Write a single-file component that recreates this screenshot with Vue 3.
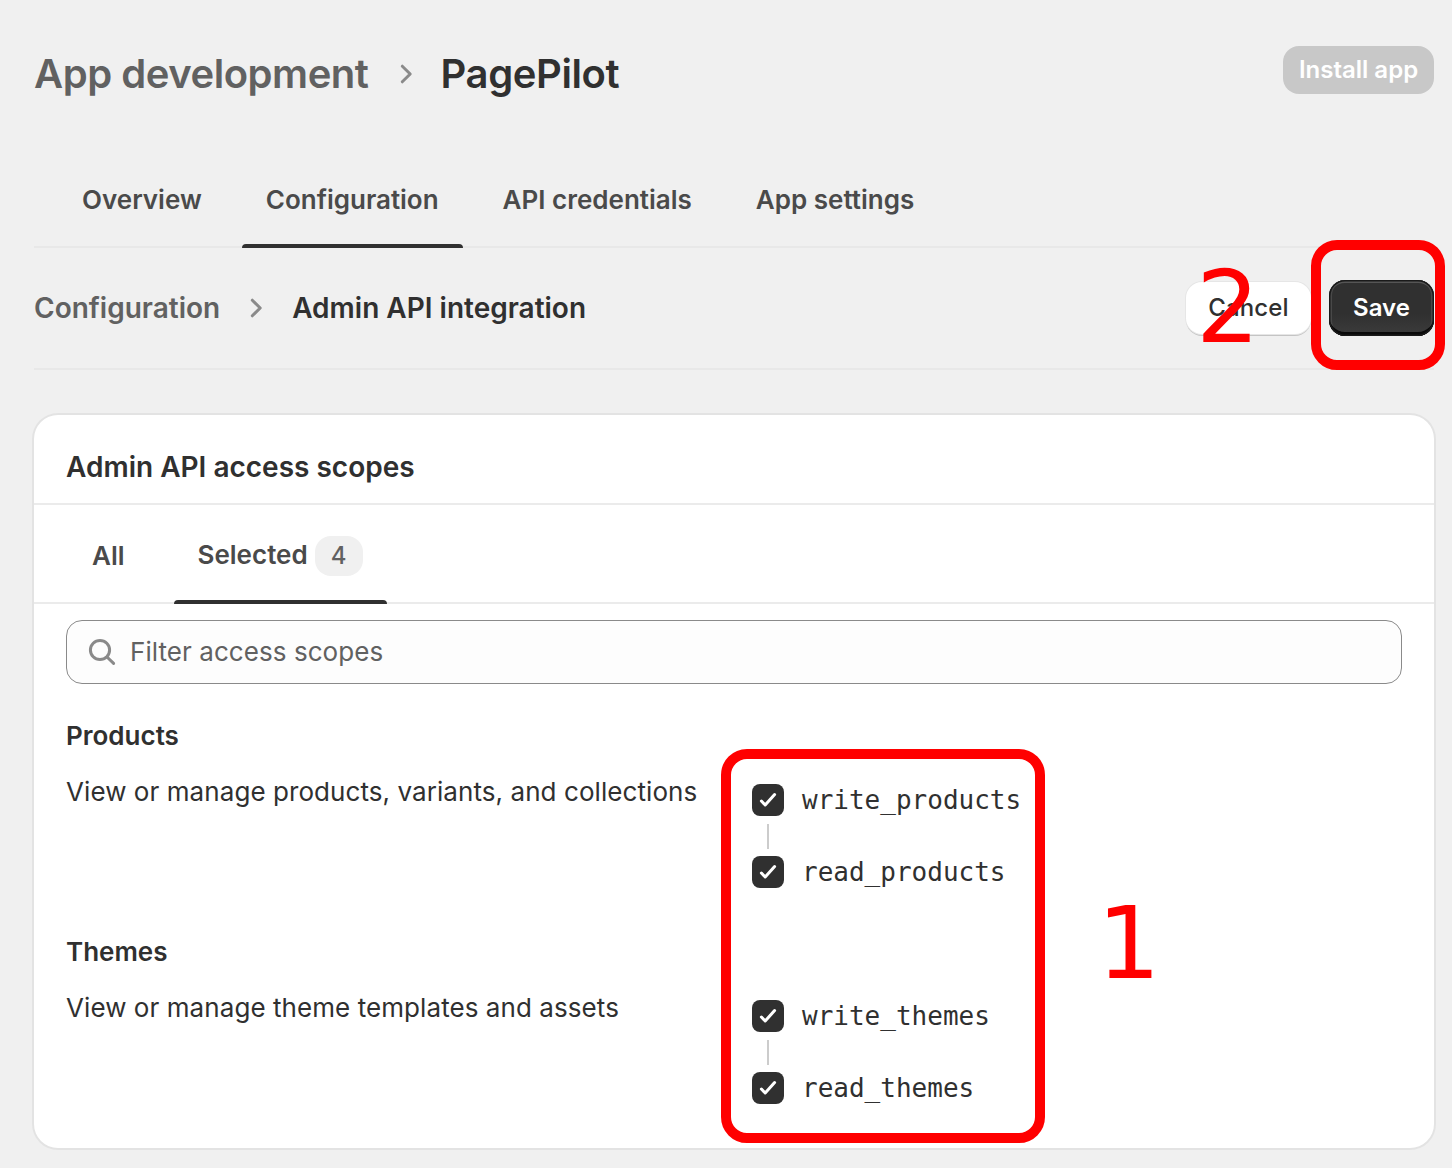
<script setup>
const tabs = [
  { label: 'Overview' },
  { label: 'Configuration', active: true },
  { label: 'API credentials' },
  { label: 'App settings' },
]
const groups = [
  {
    name: 'Products',
    description: 'View or manage products, variants, and collections',
    scopes: ['write_products', 'read_products'],
  },
  {
    name: 'Themes',
    description: 'View or manage theme templates and assets',
    scopes: ['write_themes', 'read_themes'],
  },
]
</script>

<template>
  <div class="page">
    <header class="header">
      <h1 class="title">
        <span class="muted">App development</span>
        <svg class="chevron" width="16" height="24" viewBox="0 0 16 24">
          <path d="M3.3 4.2 L11.2 12 L3.3 19.8" />
        </svg>
        <span class="current">PagePilot</span>
      </h1>
      <button class="install" disabled>Install app</button>
    </header>

    <nav class="tabs">
      <a v-for="t in tabs" :key="t.label" class="tab" :class="{ active: t.active }">{{ t.label }}</a>
    </nav>

    <div class="subheader">
      <h2 class="crumbs">
        <span class="muted">Configuration</span>
        <svg class="chevron" width="16" height="24" viewBox="0 0 16 24">
          <path d="M3.3 4.2 L11.2 12 L3.3 19.8" />
        </svg>
        <span>Admin API integration</span>
      </h2>
      <div class="actions">
        <button class="btn cancel">Cancel<span class="step two">2</span></button>
        <button class="btn save">Save<span class="outline outline-save"></span></button>
      </div>
    </div>

    <section class="card">
      <h3 class="card-title">Admin API access scopes</h3>
      <nav class="card-tabs">
        <a class="tab all">All</a>
        <a class="tab selected active">Selected<span class="badge">4</span></a>
      </nav>
      <div class="field">
        <svg width="28" height="28" viewBox="0 0 28 28">
          <circle cx="12" cy="12" r="9.6" />
          <path d="M19 19 L25.6 25.4" />
        </svg>
        <span>Filter access scopes</span>
      </div>

      <div class="groups">
        <div v-for="g in groups" :key="g.name" class="group">
          <h4>{{ g.name }}</h4>
          <div class="row">
            <p>{{ g.description }}</p>
            <ul>
              <li v-for="s in g.scopes" :key="s">
                <span class="box">
                  <svg width="32" height="32" viewBox="0 0 32 32">
                    <path d="M9.4 17 L13.2 21 L22.6 10.6" />
                  </svg>
                </span>
                <code>{{ s }}</code>
              </li>
            </ul>
          </div>
        </div>
        <span class="outline outline-scopes"></span>
        <span class="step one">1</span>
      </div>
    </section>
  </div>
</template>

<style>
body {
  background: #f0f0f0;
}
</style>

<style scoped>
.page {
  box-sizing: border-box;
  width: 1452px;
  height: 1168px;
  padding: 0 18px 0 34px;
  overflow: hidden;
  background: #f0f0f0;
  color: #303030;
  font-family: Inter, "Liberation Sans", sans-serif;
  font-size: 26px;
  font-weight: 400;
}
h1, h2, h3, h4, p, ul {
  margin: 0;
  padding: 0;
}
button {
  border: 0;
  padding: 0 0 2px;
  font-family: inherit;
}
.header {
  display: flex;
  justify-content: space-between;
  height: 168px;
}
.title {
  display: flex;
  align-items: center;
  height: 48px;
  margin-top: 49px;
  font-size: 40px;
  font-weight: 600;
  letter-spacing: -0.4px;
}
.muted {
  color: #616161;
}
.title .muted {
  letter-spacing: -0.46px;
}
.chevron {
  fill: none;
  stroke: #8a8a8a;
  stroke-width: 3;
  stroke-linecap: round;
  stroke-linejoin: round;
}
.title .chevron {
  margin: 2px 26px 0 30px;
}
.install {
  width: 151px;
  height: 48px;
  margin-top: 46px;
  border-radius: 16px;
  background: #c8c8c8;
  color: #fff;
  font-size: 24px;
  font-weight: 600;
}
.tabs {
  display: flex;
  gap: 16px;
  height: 78px;
  padding-left: 24px;
  border-bottom: 2px solid #e8e8e8;
}
.tab {
  position: relative;
  box-sizing: border-box;
  padding: 0 24px;
  color: #4a4a4a;
  font-weight: 600;
  line-height: 64px;
  white-space: nowrap;
}
.tab.active::after {
  content: "";
  position: absolute;
  left: 0;
  right: 0;
  bottom: -2px;
  height: 4px;
  border-radius: 4px 4px 0 0;
  background: #303030;
}
.subheader {
  display: flex;
  align-items: center;
  justify-content: space-between;
  height: 120px;
  border-bottom: 2px solid #e8e8e8;
}
.crumbs {
  display: flex;
  align-items: center;
  font-size: 28px;
  font-weight: 600;
}
.crumbs .chevron {
  margin: 0 27px 0 29px;
}
.actions {
  display: flex;
  gap: 18px;
}
.btn {
  position: relative;
  height: 56px;
  border-radius: 16px;
  font-size: 24px;
}
.cancel {
  width: 125px;
  height: 52px;
  margin-top: 2px;
  background: #fff;
  color: #303030;
  font-weight: 500;
  letter-spacing: 0.1px;
  box-shadow: 0 0 0 1px #e6e6e6, 0 2px 0 #c4c4c4;
}
.save {
  width: 105px;
  background: linear-gradient(#303030 60%, #3c3c3c);
  color: #fff;
  font-weight: 600;
  box-shadow: inset 0 0 0 1.5px #1a1a1a, inset 0 -4px 0 #0a0a0a, inset 0 3px 0 #555, inset 3px 0 0 #484848, inset -3px 0 0 #484848;
}
.card {
  height: 733px;
  margin-top: 45px;
  border-radius: 24px;
  background: #fff;
  box-shadow: 0 0 0 2px #e3e3e3;
}
.card-title {
  box-sizing: border-box;
  height: 90px;
  padding: 32px 32px 0;
  border-bottom: 2px solid #ebebeb;
  font-size: 28px;
  font-weight: 600;
  line-height: 40px;
}
.card-tabs {
  display: flex;
  gap: 25px;
  height: 97px;
  padding-left: 34px;
  border-bottom: 2px solid #ebebeb;
}
.card-tabs .tab {
  line-height: 101px;
}
.card-tabs .selected {
  line-height: 99px;
}
.badge {
  display: inline-block;
  width: 48px;
  height: 40px;
  margin-left: 7px;
  border-radius: 16px;
  background: #f0f0f0;
  color: #616161;
  font-size: 24px;
  font-weight: 500;
  line-height: 40px;
  text-align: center;
}
.field {
  display: flex;
  align-items: center;
  box-sizing: border-box;
  height: 64px;
  margin: 16px 32px 0;
  padding-left: 21px;
  gap: 14px;
  border: 1px solid #8a8a8a;
  border-radius: 16px;
  background: #fdfdfd;
  color: #616161;
}
.field span {
  margin-bottom: 2px;
  letter-spacing: 0.06px;
}
.field svg {
  fill: none;
  stroke: #8a8a8a;
  stroke-width: 3;
  stroke-linecap: round;
}
.groups {
  position: relative;
  padding: 32px 32px 0;
}
.group {
  height: 216px;
}
.group h4 {
  font-size: 26px;
  font-weight: 600;
  line-height: 40px;
}
.row {
  display: grid;
  grid-template-columns: 686px 1fr;
  margin-top: 16px;
}
.row p {
  line-height: 40px;
  letter-spacing: 0.07px;
  white-space: nowrap;
}
.row ul {
  display: flex;
  flex-direction: column;
  gap: 40px;
  padding-top: 12px;
  list-style: none;
}
.row li {
  position: relative;
  display: flex;
  align-items: center;
  gap: 18px;
  height: 32px;
}
.row li + li::before {
  content: "";
  position: absolute;
  left: 15px;
  top: -32px;
  width: 2px;
  height: 25px;
  background: #cccccc;
}
.box {
  width: 32px;
  height: 32px;
  border-radius: 8px;
  background: #303030;
}
.box svg {
  display: block;
  fill: none;
  stroke: #fff;
  stroke-width: 3;
  stroke-linecap: round;
  stroke-linejoin: round;
}
code {
  font-family: "DejaVu Sans Mono", monospace;
  font-size: 26px;
  font-weight: 400;
}
.outline {
  position: absolute;
  box-sizing: border-box;
  border: 10px solid #f00;
  border-radius: 26px;
}
.outline-save {
  left: -18px;
  top: -40px;
  width: 134px;
  height: 130px;
}
.outline-scopes {
  left: 687px;
  top: 65px;
  width: 324px;
  height: 394px;
}
.step {
  position: absolute;
  color: #f00;
  font-family: "DejaVu Sans", sans-serif;
  font-size: 100px;
  font-weight: 400;
  letter-spacing: 0;
  line-height: 116px;
}
.two {
  left: 10px;
  top: -32px;
}
.one {
  left: 1063px;
  top: 202px;
}
</style>
